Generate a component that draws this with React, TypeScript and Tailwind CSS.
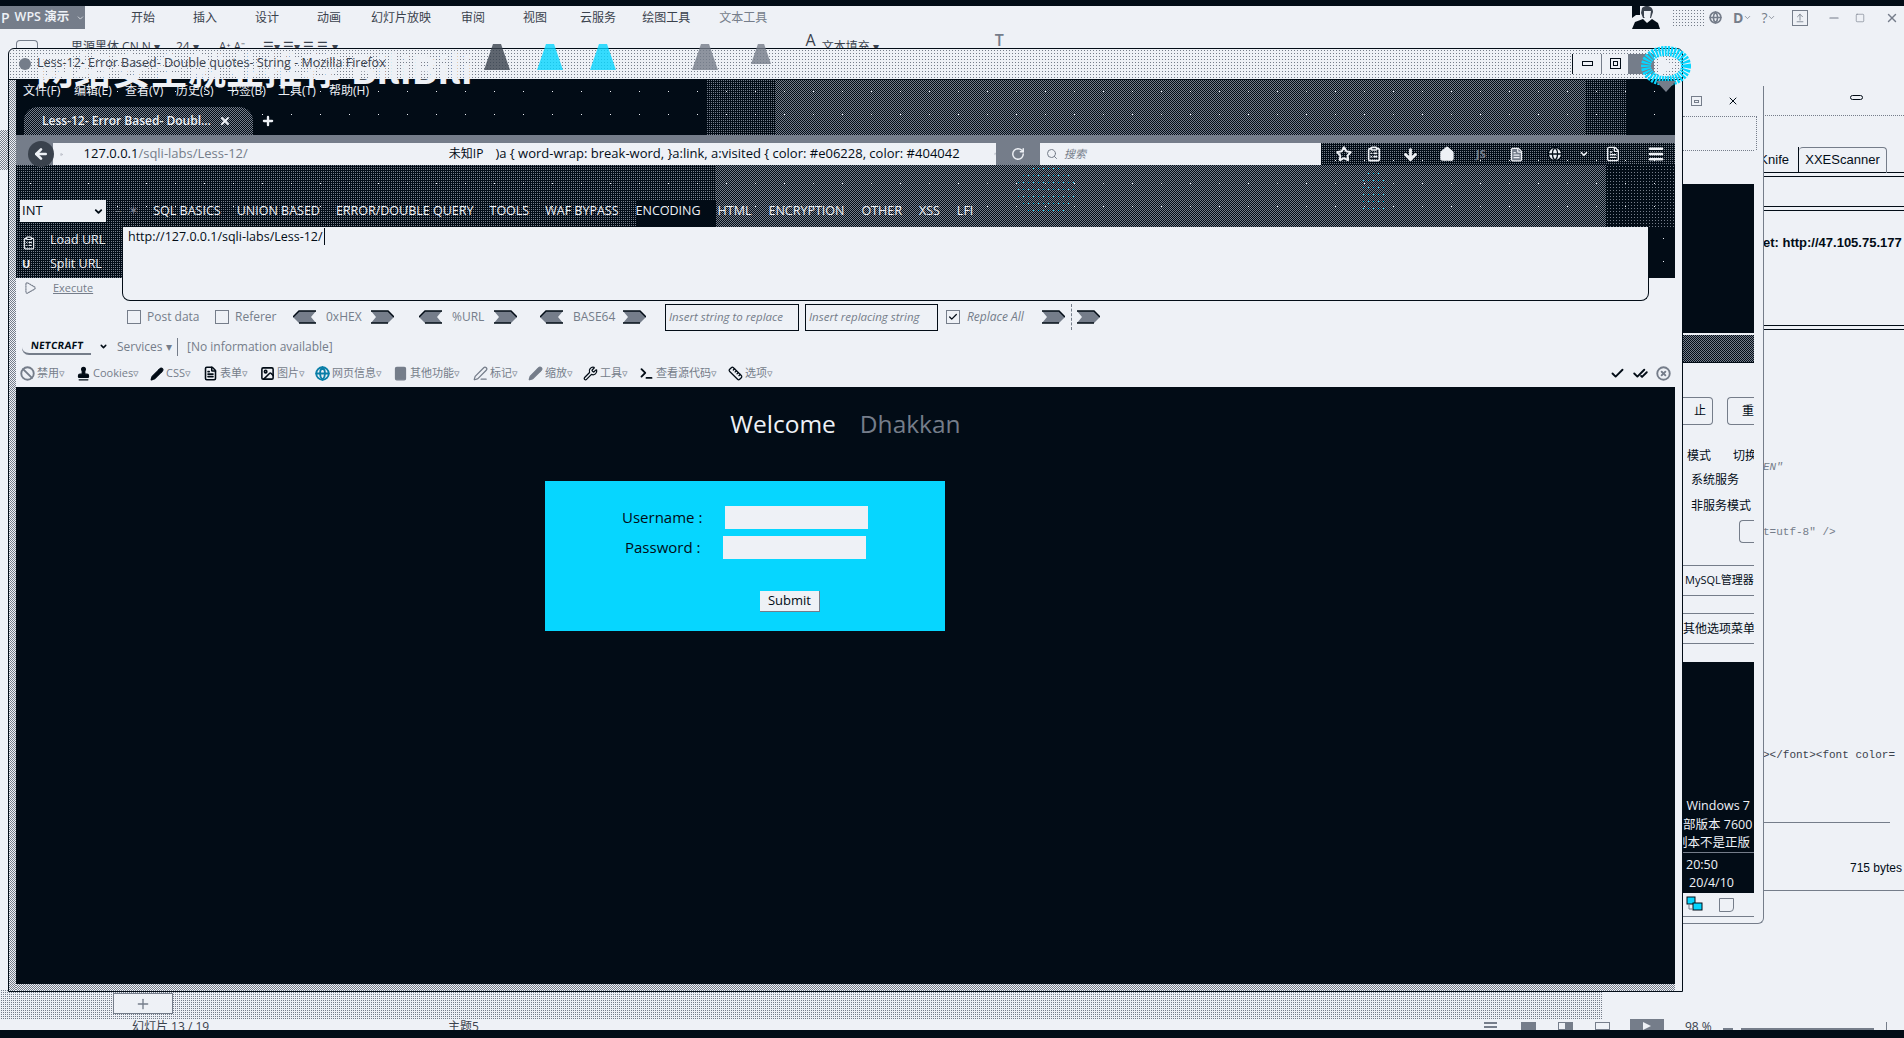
import { ArrowDown, ArrowLeft, ArrowUpFromLine, Ban, Check, CheckCheck, ChevronDown, ClipboardList, Globe, Home, Image, Info, Menu, Minus, Pencil, PenLine, Play, Plus, RotateCw, Ruler, Search, Square, Star, Stamp, Calculator, FileText, Terminal, Wrench, X, XCircle } from 'lucide-react';
import type { ReactNode } from 'react';

const UI = "font-['Open_Sans','Noto_Sans_CJK_SC',sans-serif]";
// dither textures of the reference
const DENSE = 'bg-[repeating-conic-gradient(#757d8a_0_25%,transparent_0_50%)] bg-[length:2px_2px]';
const MID = 'bg-[conic-gradient(#757d8a_25%,transparent_0)] bg-[length:2px_2px]';
const SPARSE = 'bg-[radial-gradient(circle,#757d8a_0.7px,transparent_0.8px)] bg-[length:3px_3px]';
const SPECK = 'bg-[radial-gradient(circle,#eef1f6_0.7px,transparent_0.8px)] bg-[length:29px_23px]';
const CYAN = 'bg-[radial-gradient(circle,#06d6ff_0.7px,transparent_0.8px)] bg-[length:5px_7px]';

const wpsTabs = [
  { label: '开始', cls: 'ml-[46px]' },
  { label: '插入', cls: 'ml-[38px]' },
  { label: '设计', cls: 'ml-[38px]' },
  { label: '动画', cls: 'ml-[38px]' },
  { label: '幻灯片放映', cls: 'ml-[30px]' },
  { label: '审阅', cls: 'ml-[30px]' },
  { label: '视图', cls: 'ml-[38px]' },
  { label: '云服务', cls: 'ml-[33px]' },
  { label: '绘图工具', cls: 'ml-[26px]' },
  { label: '文本工具', cls: 'ml-[29px] text-[#757d8a]' }
];

const menus = ['文件(F)', '编辑(E)', '查看(V)', '历史(S)', '书签(B)', '工具(T)', '帮助(H)'];

const hackNav = [
  { label: 'SQL BASICS', cls: 'ml-0' },
  { label: 'UNION BASED', cls: 'ml-[16px]' },
  { label: 'ERROR/DOUBLE QUERY', cls: 'ml-[16px]' },
  { label: 'TOOLS', cls: 'ml-[16px]' },
  { label: 'WAF BYPASS', cls: 'ml-[16px]' },
  { label: 'ENCODING', cls: 'ml-[17px]' },
  { label: 'HTML', cls: 'ml-[17px]' },
  { label: 'ENCRYPTION', cls: 'ml-[17px]' },
  { label: 'OTHER', cls: 'ml-[17px]' },
  { label: 'XSS', cls: 'ml-[17px]' },
  { label: 'LFI', cls: 'ml-[17px]' }
];

const devTools = [
  { icon: <Ban size={15} strokeWidth={3} className="text-[#757d8a]" />, label: '禁用', cls: 'w-[56px]' },
  { icon: <Stamp size={15} fill="#020c16" className="text-[#020c16]" />, label: 'Cookies', cls: 'w-[74px]' },
  { icon: <Pencil size={14} fill="#020c16" className="text-[#020c16]" />, label: 'CSS', cls: 'w-[53px]' },
  { icon: <FileText size={15} strokeWidth={2.5} className="text-[#020c16]" />, label: '表单', cls: 'w-[57px]' },
  { icon: <Image size={15} strokeWidth={2.5} className="text-[#020c16]" />, label: '图片', cls: 'w-[55px]' },
  { icon: <Globe size={15} strokeWidth={3} className="text-[#0a7fa8]" />, label: '网页信息', cls: 'w-[78px]' },
  { icon: <Calculator size={15} fill="#757d8a" className="text-[#757d8a]" />, label: '其他功能', cls: 'w-[80px]' },
  { icon: <PenLine size={15} className="text-[#757d8a]" />, label: '标记', cls: 'w-[55px]' },
  { icon: <Pencil size={15} fill="#757d8a" className="text-[#757d8a]" />, label: '缩放', cls: 'w-[55px]' },
  { icon: <Wrench size={15} className="text-[#020c16]" />, label: '工具', cls: 'w-[56px]' },
  { icon: <Terminal size={15} strokeWidth={3} className="text-[#020c16]" />, label: '查看源代码', cls: 'w-[89px]' },
  { icon: <Ruler size={15} className="text-[#020c16]" />, label: '选项', cls: 'w-[55px]' }
];

function Chevron({ flip }: { flip?: boolean }) {
  return (
    <svg width="23" height="14" viewBox="0 0 23 14" className="shrink-0">
      {flip ? (
        <>
          <polygon points="0,1 17,1 23,7 17,13 0,13 5,7" fill="#757d8a" />
          <path d="M0 1H17L23 7M17 13H0" stroke="#020c16" strokeWidth="1.5" fill="none" />
        </>
      ) : (
        <>
          <polygon points="23,1 6,1 0,7 6,13 23,13 18,7" fill="#757d8a" />
          <path d="M23 1H6L0 7M6 13H23" stroke="#020c16" strokeWidth="1.5" fill="none" />
        </>
      )}
    </svg>
  );
}

function DitherA({ color, x, h = 26 }: { color: string; x: string; h?: number }) {
  return (
    <svg width="26" height={h} viewBox="0 0 26 26" className={`absolute top-[44px] ${x}`}>
      <polygon points="9,0 17,0 26,26 0,26" fill={color} opacity="0.8" />
    </svg>
  );
}

function Row({ cls, children }: { cls: string; children?: ReactNode }) {
  return <div className={`flex items-center whitespace-nowrap ${cls}`}>{children}</div>;
}

function Avatar() {
  return (
    <svg width="28" height="23" viewBox="0 0 28 23" className="shrink-0">
      <rect width="28" height="23" fill="#eef1f6" />
      <path d="M0 0H8V9H4L0 12Z" fill="#020c16" />
      <path d="M10 2C14-2 21 0 21 6L19 12H11L9 7Z" fill="#3a424d" />
      <path d="M12 5H19L18 12L15 14L12 11Z" fill="#eef1f6" />
      <path d="M0 23L3 16L11 13L15 17L20 13L26 17L28 23Z" fill="#020c16" />
    </svg>
  );
}

function WpsBar() {
  return (
    <div className={`${UI} text-[12px] text-[#3a424d]`}>
      <div className="h-[6px] bg-[#020c16]" />
      <div className="flex h-[23px] items-center whitespace-nowrap">
        <div className="flex h-[23px] w-[85px] items-center bg-[#757d8a] pl-[1px] text-[12.5px] font-semibold text-[#eef1f6]">
          <span className="mr-[5px] text-[14px]">P</span>WPS 演示
          <ChevronDown size={10} className="ml-[7px]" />
        </div>
        {wpsTabs.map(t => (
          <span key={t.label} className={t.cls}>{t.label}</span>
        ))}
        <div className="ml-auto flex w-[272px] items-center">
          <Avatar />
          <div className={`ml-[12px] h-[18px] w-[34px] ${SPARSE}`} />
          <Globe size={13} strokeWidth={3} className="ml-[3px] text-[#757d8a]" />
          <span className="ml-[11px] text-[14px] font-bold text-[#757d8a]">D</span>
          <ChevronDown size={9} className="text-[#757d8a]" />
          <span className="ml-[9px] text-[14px] text-[#757d8a]">?</span>
          <ChevronDown size={9} className="text-[#757d8a]" />
          <div className="ml-[16px] flex h-[16px] w-[16px] items-center justify-center border border-[#757d8a]">
            <ArrowUpFromLine size={10} className="text-[#757d8a]" />
          </div>
          <Minus size={14} strokeWidth={2} className="ml-[19px] text-[#757d8a]" />
          <Square size={10} strokeWidth={1.5} className="ml-[14px] text-[#757d8a]" />
          <X size={14} strokeWidth={2.5} className="ml-[20px] text-[#757d8a]" />
        </div>
      </div>
      {/* ribbon, cut off by the browser window */}
      <div className="flex h-[19px] items-end overflow-hidden whitespace-nowrap pl-[16px]">
        <div className="h-[8px] w-[22px] rounded-t-sm border border-b-0 border-[#757d8a]" />
        <span className="ml-[33px] translate-y-[8px]">思源黑体 CN N ▾</span>
        <span className="ml-[16px] translate-y-[8px]">24 ▾</span>
        <span className="ml-[20px] translate-y-[8px]">A⁺ A⁻</span>
        <span className="ml-[18px] translate-y-[8px]">☰▾ ☰▾ ☰ ☰ ▾</span>
        <span className="ml-[468px] translate-y-[4px] text-[16px]">A</span>
        <span className="ml-[6px] translate-y-[8px]">文本填充 ▾</span>
        <span className="ml-[116px] translate-y-[4px] text-[16px] font-semibold text-[#757d8a]">T</span>
      </div>
    </div>
  );
}

function Persona() {
  return (
    <div className="relative h-[147px] shrink-0 overflow-hidden bg-[#020c16] text-[#eef1f6]">
      {/* star picture behind the browser chrome */}
      <div className={`absolute left-[690px] top-0 h-[55px] w-[70px] ${MID}`} />
      <div className={`absolute left-[760px] top-0 h-[55px] w-[810px] ${DENSE}`} />
      <div className={`absolute left-[1570px] top-0 h-[55px] w-[40px] ${MID}`} />
      <div className={`absolute left-0 top-[85px] h-[62px] w-[620px] ${MID}`} />
      <div className={`absolute left-[620px] top-[85px] h-[35px] w-[80px] ${MID}`} />
      <div className={`absolute left-[700px] top-[85px] h-[62px] w-[890px] ${DENSE}`} />
      <div className={`absolute left-[1590px] top-[85px] h-[62px] w-[70px] ${SPARSE}`} />
      <div className={`absolute inset-0 ${SPECK}`} />
      <div className={`absolute left-[1000px] top-[85px] h-[50px] w-[60px] rounded-full ${CYAN}`} />
      <div className={`absolute left-[1345px] top-[90px] h-[45px] w-[25px] rounded-full ${CYAN}`} />

      <div className="relative z-10 flex h-[27px] items-center gap-[13px] pb-[5px] pl-[7px] text-[12px]">
        {menus.map(m => (
          <span key={m} className="w-[38px] whitespace-nowrap">{m}</span>
        ))}
      </div>

      <div className="relative flex h-[28px] items-end">
        <div className="relative ml-[8px] flex h-[28px] w-[229px] items-center rounded-t-[14px] bg-[#020c16] pl-[18px] text-[12px] font-semibold">
          <div className={`absolute inset-0 rounded-t-[14px] ${DENSE}`} />
          <span className="relative whitespace-nowrap">Less-12- Error Based- Doubl...</span>
          <X size={12} strokeWidth={4} className="relative ml-[8px]" />
        </div>
        <Plus size={14} strokeWidth={4} className="mb-[7px] ml-[8px]" />
      </div>

      <div className="relative h-[8px] bg-[#757d8a]" />

      <div className="relative flex h-[22px] items-stretch whitespace-nowrap">
        <div className="flex w-[37px] items-center justify-end bg-[#757d8a]">
          <div className="z-10 -mr-[1px] flex h-[26px] w-[26px] shrink-0 items-center justify-center rounded-full bg-[#3a424d]">
            <ArrowLeft size={16} strokeWidth={4} />
          </div>
        </div>
        <div className="flex w-[943px] items-center bg-[#eef1f6] text-[12px] text-[#020c16]">
          <Info size={13} className="ml-[7px] text-[#757d8a]" />
          <span className="ml-[21px] text-[13px]">127.0.0.1<span className="text-[#757d8a]">/sqli-labs/Less-12/</span></span>
          <span className="ml-[201px]">未知IP</span>
          <span className="ml-[12px] text-[13px]">{')a { word-wrap: break-word, }a:link, a:visited { color: #e06228, color: #404042'}</span>
          <RotateCw size={12} className="ml-[34px] text-[#757d8a]" />
        </div>
        <div className="flex w-[44px] items-center justify-center bg-[#757d8a]">
          <RotateCw size={14} strokeWidth={2.5} className="text-[#eef1f6]" />
        </div>
        <div className="flex w-[281px] items-center bg-[#eef1f6] pl-[6px] text-[11px] italic text-[#757d8a]">
          <Search size={12} />
          <span className="ml-[6px]">搜索</span>
        </div>
        <div className="relative flex-1 pl-[15px]">
          <div className={`absolute inset-0 ${MID}`} />
          <div className="relative flex h-[22px] items-center">
            <Star size={16} strokeWidth={3} />
            <ClipboardList size={16} strokeWidth={2.5} className="ml-[14px]" />
            <ArrowDown size={17} strokeWidth={4} className="ml-[20px]" />
            <Home size={16} fill="#eef1f6" className="ml-[20px]" />
            <span className="ml-[21px] text-[11px] font-bold text-[#757d8a]">JS</span>
            <FileText size={15} fill="#757d8a" className="ml-[23px] text-[#eef1f6]" />
            <Globe size={16} fill="#eef1f6" className="ml-[23px] text-[#020c16]" />
            <ChevronDown size={10} strokeWidth={4} className="ml-[16px]" />
            <FileText size={16} className="ml-[16px]" />
            <Menu size={18} strokeWidth={3.5} className="ml-[26px]" />
          </div>
        </div>
      </div>

      <div className="relative ml-[4px] mt-[35px] flex h-[22px] items-center text-[12.5px]">
        <div className="flex h-[22px] w-[86px] items-center justify-between bg-[#eef1f6] px-[2px] text-[13px] text-[#020c16]">
          INT
          <ChevronDown size={11} strokeWidth={4} />
        </div>
        <span className="ml-[9px] text-[#757d8a]">–</span>
        <span className="ml-[7px] text-[#757d8a]">✶</span>
        <div className="ml-[14px] flex whitespace-nowrap">
          {hackNav.map(n => (
            <span key={n.label} className={n.cls}>{n.label}</span>
          ))}
        </div>
      </div>
    </div>
  );
}

function HackBar() {
  return (
    <div className="shrink-0 text-[12px] text-[#757d8a]">
      <div className="flex h-[74px]">
        <div className="w-[106px] shrink-0">
          <div className="relative h-[51px] bg-[#020c16] text-[#eef1f6]">
            <div className={`absolute inset-0 ${MID}`} />
            <div className="relative flex h-[23px] items-end pl-[6px]">
              <ClipboardList size={14} />
              <span className="ml-[14px] text-[12.5px]">Load URL</span>
            </div>
            <div className="relative flex h-[28px] items-center pl-[6px]">
              <span className="w-[14px] text-[11px] font-bold">U</span>
              <span className="ml-[14px] text-[12.5px]">Split URL</span>
            </div>
          </div>
          <div className="flex h-[20px] items-center pl-[7px]">
            <Play size={14} strokeDasharray="2 2" />
            <span className="ml-[16px] text-[11px] underline">Execute</span>
          </div>
        </div>
        <div className="flex-1 rounded-b-lg border-b border-l border-r border-[#020c16] bg-[#eef1f6] pl-[5px] pt-[1px] text-[12.5px] text-[#020c16]">
          <span className="border-r border-[#020c16] pr-[1px]">http://127.0.0.1/sqli-labs/Less-12/</span>
        </div>
        <div className="w-[26px] shrink-0">
          <div className="relative h-[51px] bg-[#020c16]">
            <div className={`absolute inset-0 ${SPECK}`} />
          </div>
        </div>
      </div>

      {/* load options */}
      <Row cls="h-[32px] pl-[111px]">
        <div className="h-[14px] w-[14px] border border-[#757d8a]" />
        <span className="ml-[6px] w-[68px]">Post data</span>
        <div className="h-[14px] w-[14px] border border-[#757d8a]" />
        <span className="ml-[6px] w-[58px]">Referer</span>
        <Chevron />
        <span className="ml-[10px] w-[45px]">0xHEX</span>
        <Chevron flip />
        <div className="w-[25px]" />
        <Chevron />
        <span className="ml-[10px] w-[42px]">%URL</span>
        <Chevron flip />
        <div className="w-[23px]" />
        <Chevron />
        <span className="ml-[10px] w-[50px]">BASE64</span>
        <Chevron flip />
        <div className="ml-[19px] flex h-[27px] w-[134px] items-center overflow-hidden border border-[#020c16] pl-[3px] text-[11.5px] italic">Insert string to replace</div>
        <div className="ml-[6px] flex h-[27px] w-[133px] items-center overflow-hidden border border-[#020c16] pl-[3px] text-[11.5px] italic">Insert replacing string</div>
        <div className="ml-[8px] flex h-[14px] w-[14px] items-center justify-center border border-[#757d8a]">
          <Check size={10} strokeWidth={3} className="text-[#020c16]" />
        </div>
        <span className="ml-[7px] w-[75px] italic">Replace All</span>
        <Chevron flip />
        <div className="ml-[6px] h-[26px] border-l border-dashed border-[#757d8a]" />
        <div className="ml-[5px]"><Chevron flip /></div>
      </Row>

      {/* netcraft */}
      <Row cls="h-[27px] pl-[6px]">
        <span className="w-[70px] -skew-x-6 rounded-bl-lg border-b-2 border-[#757d8a] text-center text-[10px] font-bold tracking-wide text-[#020c16]">NETCRAFT</span>
        <ChevronDown size={9} strokeWidth={4} className="ml-[7px] text-[#020c16]" />
        <span className="ml-[9px] w-[60px]">Services ▾</span>
        <div className="h-[18px] border-l border-[#757d8a]" />
        <span className="ml-[9px]">[No information available]</span>
      </Row>

      {/* web developer toolbar */}
      <Row cls="h-[27px] pl-[4px]">
        {devTools.map(t => (
          <div key={t.label} className={`flex items-center ${t.cls}`}>
            {t.icon}
            <span className="ml-[2px] text-[11px]">{t.label}▿</span>
          </div>
        ))}
        <div className="ml-auto flex items-center gap-[8px] pr-[4px] text-[#020c16]">
          <Check size={15} strokeWidth={3} />
          <CheckCheck size={15} strokeWidth={3} />
          <XCircle size={15} strokeWidth={3} className="text-[#757d8a]" />
        </div>
      </Row>
    </div>
  );
}

function LessPage() {
  return (
    <div className="flex-1 bg-[#020c16]">
      <div className="flex justify-center gap-[24px] pt-[21px] text-[24.5px] leading-[32px]">
        <span className="text-[#eef1f6]">Welcome</span>
        <span className="text-[#757d8a]">Dhakkan</span>
      </div>
      <div className="ml-[529px] mt-[41px] h-[150px] w-[400px] bg-[#06d6ff] pt-[25px] text-[15px] text-[#020c16]">
        <div className="flex h-[23px] items-center">
          <span className="ml-[77px] w-[103px]">Username :</span>
          <div className="h-[23px] w-[143px] bg-[#eef1f6]" />
        </div>
        <div className="mt-[7px] flex h-[23px] items-center">
          <span className="ml-[80px] w-[98px]">Password :</span>
          <div className="h-[23px] w-[143px] bg-[#eef1f6]" />
        </div>
        <button className="ml-[215px] mt-[32px] flex h-[21px] w-[60px] items-center justify-center border-b border-r border-[#757d8a] bg-[#eef1f6] text-[13px]">
          Submit
        </button>
      </div>
    </div>
  );
}

function BrowserWindow() {
  return (
    <div className={`${UI} absolute left-[8px] top-[48px] flex h-[944px] w-[1675px] flex-col rounded-t-md border border-[#020c16] bg-[#eef1f6]`}>
      <div className={`flex h-[29px] shrink-0 items-center whitespace-nowrap pl-[10px] text-[12.5px] text-[#3a424d] ${SPARSE}`}>
        <div className="relative z-10 h-[12px] w-[12px] rounded-full bg-[#757d8a]" />
        <span className="relative z-10 ml-[6px]">Less-12- Error Based- Double quotes- String - Mozilla Firefox</span>
        <div className="ml-auto mr-[28px] flex items-center">
          <div className="flex h-[20px] w-[29px] items-center justify-center border-l border-[#020c16] bg-[#eef1f6]">
            <div className="h-[5px] w-[11px] border border-[#020c16]" />
          </div>
          <div className="flex h-[20px] w-[27px] items-center justify-center border-l border-[#757d8a] bg-[#eef1f6]">
            <div className="flex h-[11px] w-[11px] items-center justify-center border border-[#020c16]">
              <div className="h-[5px] w-[5px] border border-[#020c16]" />
            </div>
          </div>
          <div className="h-[20px] w-[26px] bg-[#757d8a]" />
        </div>
      </div>
      <div className="h-[1px] shrink-0" />
      <div className="h-[1px] shrink-0 bg-[#020c16]" />

      <div className="relative flex min-h-0 flex-1 flex-col px-[7px]">
        <div className={`absolute bottom-0 left-0 top-0 w-[7px] ${DENSE}`} />
        <Persona />
        <HackBar />
        <LessPage />
        <div className={`h-[7px] shrink-0 ${DENSE}`} />
      </div>
    </div>
  );
}

function ServerPanel() {
  return (
    <div className={`${UI} absolute left-[1683px] top-[86px] h-[838px] w-[81px] overflow-hidden rounded-br-md border-b border-r border-[#757d8a] text-[12px] text-[#020c16]`}>
      <div className="flex h-[30px] items-center">
        <div className="ml-[8px] flex h-[10px] w-[11px] items-center justify-center border border-[#757d8a]">
          <div className="h-[3px] w-[5px] border border-[#757d8a]" />
        </div>
        <X size={12} strokeWidth={2} className="ml-[25px]" />
      </div>
      <div className="h-[34px] w-[74px] border-r border-t border-dotted border-[#757d8a]" />
      <div className="h-[34px] w-[71px] border-t border-dotted border-[#757d8a]" />
      <div className="h-[149px] w-[71px] bg-[#020c16]" />
      <div className="mt-[2px] h-[27px] w-[71px] bg-[#020c16]">
        <div className={`h-full w-full ${DENSE}`} />
      </div>

      <div className="relative h-[298px] w-[71px] overflow-hidden border-t border-[#020c16]">
        <div className="mt-[34px] flex">
          <div className="flex h-[28px] w-[30px] items-center justify-end rounded-r border border-l-0 border-[#757d8a] pr-[6px]">止</div>
          <div className="ml-[14px] flex h-[28px] w-[27px] items-center justify-end rounded-l border border-r-0 border-[#757d8a]">重</div>
        </div>
        <div className="mt-[23px] flex h-[16px] items-center justify-between whitespace-nowrap">
          <span className="w-[28px] overflow-hidden text-right">模式</span>
          <span className="w-[21px] overflow-hidden">切换</span>
        </div>
        <div className="mt-[8px] h-[16px] pl-[8px] leading-[16px]">系统服务</div>
        <div className="mt-[10px] h-[16px] whitespace-nowrap pl-[8px] leading-[16px]">非服务模式</div>
        <div className="ml-[56px] mt-[6px] h-[23px] w-[15px] rounded-l border border-r-0 border-[#757d8a]" />
        <div className="mt-[22px] flex h-[31px] items-center overflow-hidden whitespace-nowrap border-y border-[#757d8a] pl-[2px] text-[11px]">MySQL管理器</div>
        <div className="mt-[17px] flex h-[31px] items-center overflow-hidden whitespace-nowrap border-y border-[#757d8a]">其他选项菜单</div>
      </div>

      <div className="h-[233px] w-[71px] overflow-hidden border-t-2 border-[#eef1f6] bg-[#020c16] text-[12.5px] text-[#eef1f6]">
        <div className="h-[135px]" />
        <div className="whitespace-nowrap pr-[4px] text-right leading-[18px]">Windows 7</div>
        <div className="whitespace-nowrap pr-[4px] text-right leading-[19px]">部版本 7600</div>
        <div className="flex justify-end whitespace-nowrap border-b border-[#757d8a] pr-[4px] leading-[18px]">副本不是正版</div>
        <div className="mt-[2px] pl-[3px] leading-[19px]">20:50</div>
        <div className="flex justify-end whitespace-nowrap pr-[20px] leading-[17px]">20/4/10</div>
      </div>

      <div className="flex h-[24px] w-[71px] items-center border-b border-[#757d8a]">
        <svg width="17" height="17" viewBox="0 0 17 17" className="ml-[3px]">
          <rect x="1" y="1" width="8" height="7" fill="#06d6ff" stroke="#020c16" />
          <rect x="7" y="7" width="9" height="7" fill="#06d6ff" stroke="#020c16" />
          <path d="M3 8V13H7" stroke="#757d8a" fill="none" />
        </svg>
        <div className="ml-[16px] h-[14px] w-[15px] rounded-br border border-[#757d8a]" />
      </div>
    </div>
  );
}

function ToolWindow() {
  return (
    <div className={`${UI} absolute left-[1763px] top-[115px] h-[781px] w-[141px] overflow-hidden border-t border-dotted border-[#757d8a] text-[#020c16]`}>
      <div className="h-[31px]" />
      <div className="flex h-[26px] items-center border-b border-[#020c16] font-['Liberation_Sans',sans-serif] text-[13px]">
        <div className="flex h-[26px] w-[36px] items-center justify-end border-r border-[#020c16] pr-[9px]">Knife</div>
        <div className="flex h-[26px] w-[88px] items-center justify-center rounded-t border-r border-t border-[#757d8a]">XXEScanner</div>
      </div>
      <div className="mt-[3px] h-[1px] bg-[#020c16]" />
      <div className="mt-[29px] h-[1px] bg-[#020c16]" />
      <div className="mt-[3px] h-[1px] bg-[#020c16]" />
      <div className="mt-[22px] h-[18px] whitespace-nowrap font-['Liberation_Sans',sans-serif] text-[13px] font-bold">et: http://47.105.75.177</div>
      <div className="mt-[74px] h-[1px] bg-[#020c16]" />
      <div className="mt-[3px] h-[1px] bg-[#020c16]" />
      <div className="mt-[129px] h-[16px] font-['Liberation_Mono',monospace] text-[11px] italic text-[#757d8a]">EN"</div>
      <div className="mt-[49px] h-[16px] font-['Liberation_Mono',monospace] text-[11px] text-[#757d8a]">{'t=utf-8" />'}</div>
      <div className="mt-[207px] h-[16px] whitespace-nowrap font-['Liberation_Mono',monospace] text-[11px] text-[#3a424d]">{'></font><font color='}</div>
      <div className="mt-[59px] h-[1px] w-[127px] bg-[#757d8a]" />
      <div className="ml-[87px] mt-[36px] h-[18px] whitespace-nowrap font-['Liberation_Sans',sans-serif] text-[12px]">715 bytes</div>
      <div className="mt-[13px] h-[1px] bg-[#757d8a]" />
    </div>
  );
}

function StatusBar() {
  return (
    <div className={`${UI} flex h-[11px] items-start overflow-hidden whitespace-nowrap text-[12px] leading-[16px] text-[#3a424d]`}>
      <span className="ml-[132px] w-[80px]">幻灯片 13 / 19</span>
      <span className="ml-[236px] w-[36px]">主题5</span>
      <div className="ml-[1000px] mt-[3px] w-[13px] border-y-2 border-[#757d8a] pb-[2px]" />
      <div className="ml-[24px] mt-[3px] h-[8px] w-[15px] bg-[#757d8a]" />
      <div className="ml-[22px] mt-[3px] flex h-[8px] w-[15px]">
        <div className="w-1/2 border border-[#757d8a]" />
        <div className="w-1/2 bg-[#757d8a]" />
      </div>
      <div className="ml-[22px] mt-[3px] h-[8px] w-[15px] border border-[#757d8a]" />
      <div className="ml-[20px] flex h-[11px] w-[34px] items-end justify-center bg-[#757d8a]">
        <div className="h-0 w-0 border-y-[4px] border-l-[8px] border-y-transparent border-l-[#eef1f6]" />
      </div>
      <span className="ml-[21px] w-[28px]">98 %</span>
      <div className="ml-[10px] mt-[9px] h-[2px] w-[10px] bg-[#757d8a]" />
      <div className="ml-[8px] mt-[9px] h-[2px] w-[133px] bg-[#757d8a]" />
      <div className="ml-[12px] mt-[3px] h-[8px] w-[1px] bg-[#757d8a]" />
    </div>
  );
}

export default function App() {
  return (
    <div className="relative flex h-[1038px] w-[1904px] flex-col overflow-hidden bg-[#eef1f6]">
      <WpsBar />

      {/* slide area seen around the windows */}
      <div className={`absolute left-0 top-[130px] h-[40px] w-[8px] ${DENSE}`} />
      <div className={`absolute left-0 top-[990px] h-[29px] w-[1603px] ${MID}`} />
      <div className="absolute left-[113px] top-[993px] flex h-[21px] w-[60px] items-center justify-center border border-[#757d8a] bg-[#eef1f6]">
        <Plus size={16} strokeWidth={2} className="text-[#757d8a]" />
      </div>
      <div className="absolute left-[1850px] top-[95px] h-[5px] w-[13px] rounded-sm border border-[#020c16]" />

      <ToolWindow />
      <ServerPanel />
      <BrowserWindow />

      {/* video overlay: watermark and slide shapes on top of the windows */}
      <div className="pointer-events-none absolute left-[36px] top-[47px] whitespace-nowrap font-['Noto_Sans_CJK_SC',sans-serif] text-[38px] font-bold leading-[42px] text-[#eef1f6]">
        网络安全就业推荐 <span className="ml-[2px]">BiliBili</span>
      </div>
      <DitherA color="#3a424d" x="left-[484px]" />
      <DitherA color="#06d6ff" x="left-[537px]" />
      <DitherA color="#06d6ff" x="left-[590px]" />
      <DitherA color="#757d8a" x="left-[692px]" />
      <DitherA color="#757d8a" x="left-[748px]" h={20} />
      <svg width="56" height="50" viewBox="0 0 56 50" className="absolute left-[1638px] top-[44px]">
        <ellipse cx="28" cy="22" rx="20" ry="15" fill="none" stroke="#06d6ff" strokeWidth="10" strokeDasharray="2 1" />
        <polygon points="22,12 36,22 22,32" fill="#eef1f6" />
        <polygon points="18,37 38,37 28,48" fill="#757d8a" />
      </svg>

      <div className="mt-auto">
        <StatusBar />
        <div className="h-[8px] bg-[#020c16]" />
      </div>
    </div>
  );
}
